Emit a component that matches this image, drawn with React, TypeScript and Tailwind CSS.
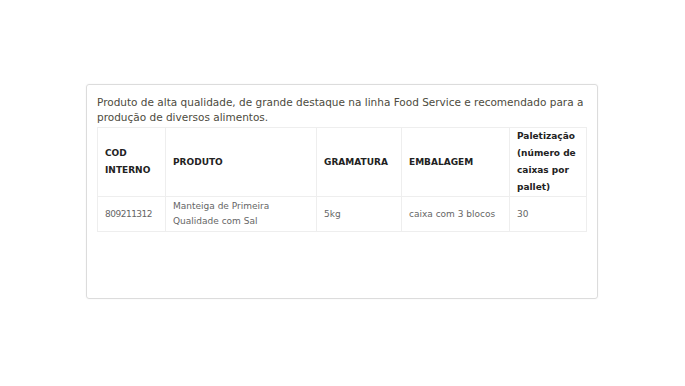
import React from 'react';

const rows = [
  {
    cod: '809211312',
    produto: 'Manteiga de Primeira Qualidade com Sal',
    gramatura: '5kg',
    embalagem: 'caixa com 3 blocos',
    pallet: '30',
  },
];

export default function App() {
  return (
    <div className="min-h-[386px] bg-white pt-[84px]" style={{ fontFamily: '"DejaVu Sans", sans-serif' }}>
      <div className="ml-[86px] h-[215px] w-[512px] rounded-[3px] border border-[#dcdcdc] px-[10px] pt-[10px] shadow-[0_0_2px_rgba(0,0,0,0.06)]">
        <p className="text-[10.5px] leading-[15px] text-[#4d4b40]">
          Produto de alta qualidade, de grande destaque na linha Food Service e recomendado para a produção de diversos alimentos.
        </p>
        <table className="mt-[2px] w-[489px] table-fixed border-collapse text-[9px]">
          <colgroup>
            <col className="w-[68px]" />
            <col className="w-[151px]" />
            <col className="w-[85px]" />
            <col className="w-[108px]" />
            <col className="w-[77px]" />
          </colgroup>
          <thead>
            <tr className="h-[65px] text-left font-bold text-[#222]">
              <th className="border border-[#eeeeee] px-[7px] leading-[17px]">COD INTERNO</th>
              <th className="border border-[#eeeeee] px-[7px] leading-[17px]">PRODUTO</th>
              <th className="border border-[#eeeeee] px-[7px] leading-[17px]">GRAMATURA</th>
              <th className="border border-[#eeeeee] px-[7px] leading-[17px]">EMBALAGEM</th>
              <th className="border border-[#eeeeee] px-[7px] leading-[17px]">Paletização (número de caixas por pallet)</th>
            </tr>
          </thead>
          <tbody>
            {rows.map((r) => (
              <tr key={r.cod} className="h-[35px] text-[#666]">
                <td className="border border-[#eeeeee] px-[7px] leading-[15px] tracking-[-0.5px]">{r.cod}</td>
                <td className="border border-[#eeeeee] px-[7px] leading-[15px]">{r.produto}</td>
                <td className="border border-[#eeeeee] px-[7px] leading-[15px]">{r.gramatura}</td>
                <td className="border border-[#eeeeee] px-[7px] leading-[15px]">{r.embalagem}</td>
                <td className="border border-[#eeeeee] px-[7px] leading-[15px]">{r.pallet}</td>
              </tr>
            ))}
          </tbody>
        </table>
      </div>
    </div>
  );
}
